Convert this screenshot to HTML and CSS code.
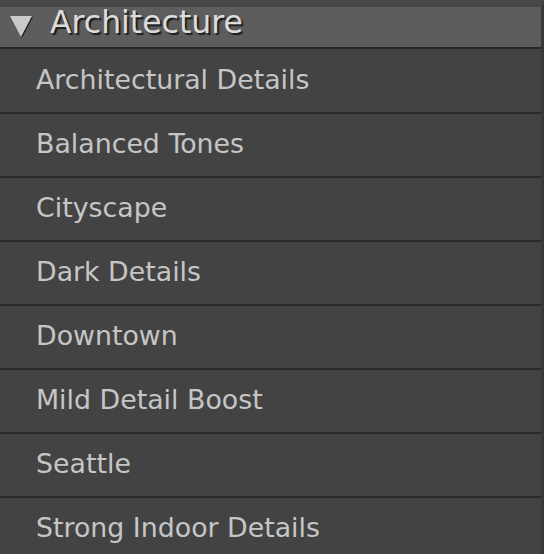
FILE: index.html
```html
<!DOCTYPE html>
<html lang="en">
   <head>
      <meta charset="UTF-8">
      <title>Presets</title>
      <link rel="stylesheet" href="styles.css">
   </head>
   <body>
      <div class="panel">
         <div class="group-head">
            <svg class="arrow" width="26" height="26" viewBox="0 0 26 26">
               <polygon points="2,4 24,4 13,25" fill="#1e1e1e" transform="translate(1,1)"/>
               <polygon points="2,4 24,4 13,25" fill="#c9c9c9"/>
            </svg>
            <span class="group-title">Architecture</span>
         </div>
         <ul class="presets">
            <li>Architectural Details</li>
            <li>Balanced Tones</li>
            <li>Cityscape</li>
            <li>Dark Details</li>
            <li>Downtown</li>
            <li>Mild Detail Boost</li>
            <li>Seattle</li>
            <li>Strong Indoor Details</li>
         </ul>
      </div>
   </body>
</html>
```

FILE: styles.css
```css
/* preset list panel */
body {
  margin: 0;
  padding: 0;
  background-color: #434343;
  font-family: 'DejaVu Sans', 'Liberation Sans', sans-serif;
  overflow: hidden;
}
.panel {
  width: 544px;
  height: 554px;
  border-right: 3px solid #383838;
  box-sizing: border-box;
  border-top: 7px solid #474747;
}
.group-head {
  height: 40px;
  background-color: #5d5d5d;
  border-bottom: 2px solid #272727;
  display: flex;
  align-items: center;
  padding-left: 8px;
  color: #dcdcdc;
  text-shadow: 2px 2px 1px #1e1e1e;
}
.arrow {
  margin-right: 16px;
  margin-top: -4px;
}
.group-title {
  font-size: 31.5px;
  margin-top: -11px;
}
ul.presets {
  list-style-type: none;
  margin: 0;
  padding: 1px 0 0 0;
}
ul.presets li {
  height: 59px;
  padding-bottom: 3px;
  border-bottom: 2px solid #2c2c2c;
  display: flex;
  align-items: center;
  padding-left: 36px;
  font-size: 26.8px;
  color: #c6c6c6;
}
```
